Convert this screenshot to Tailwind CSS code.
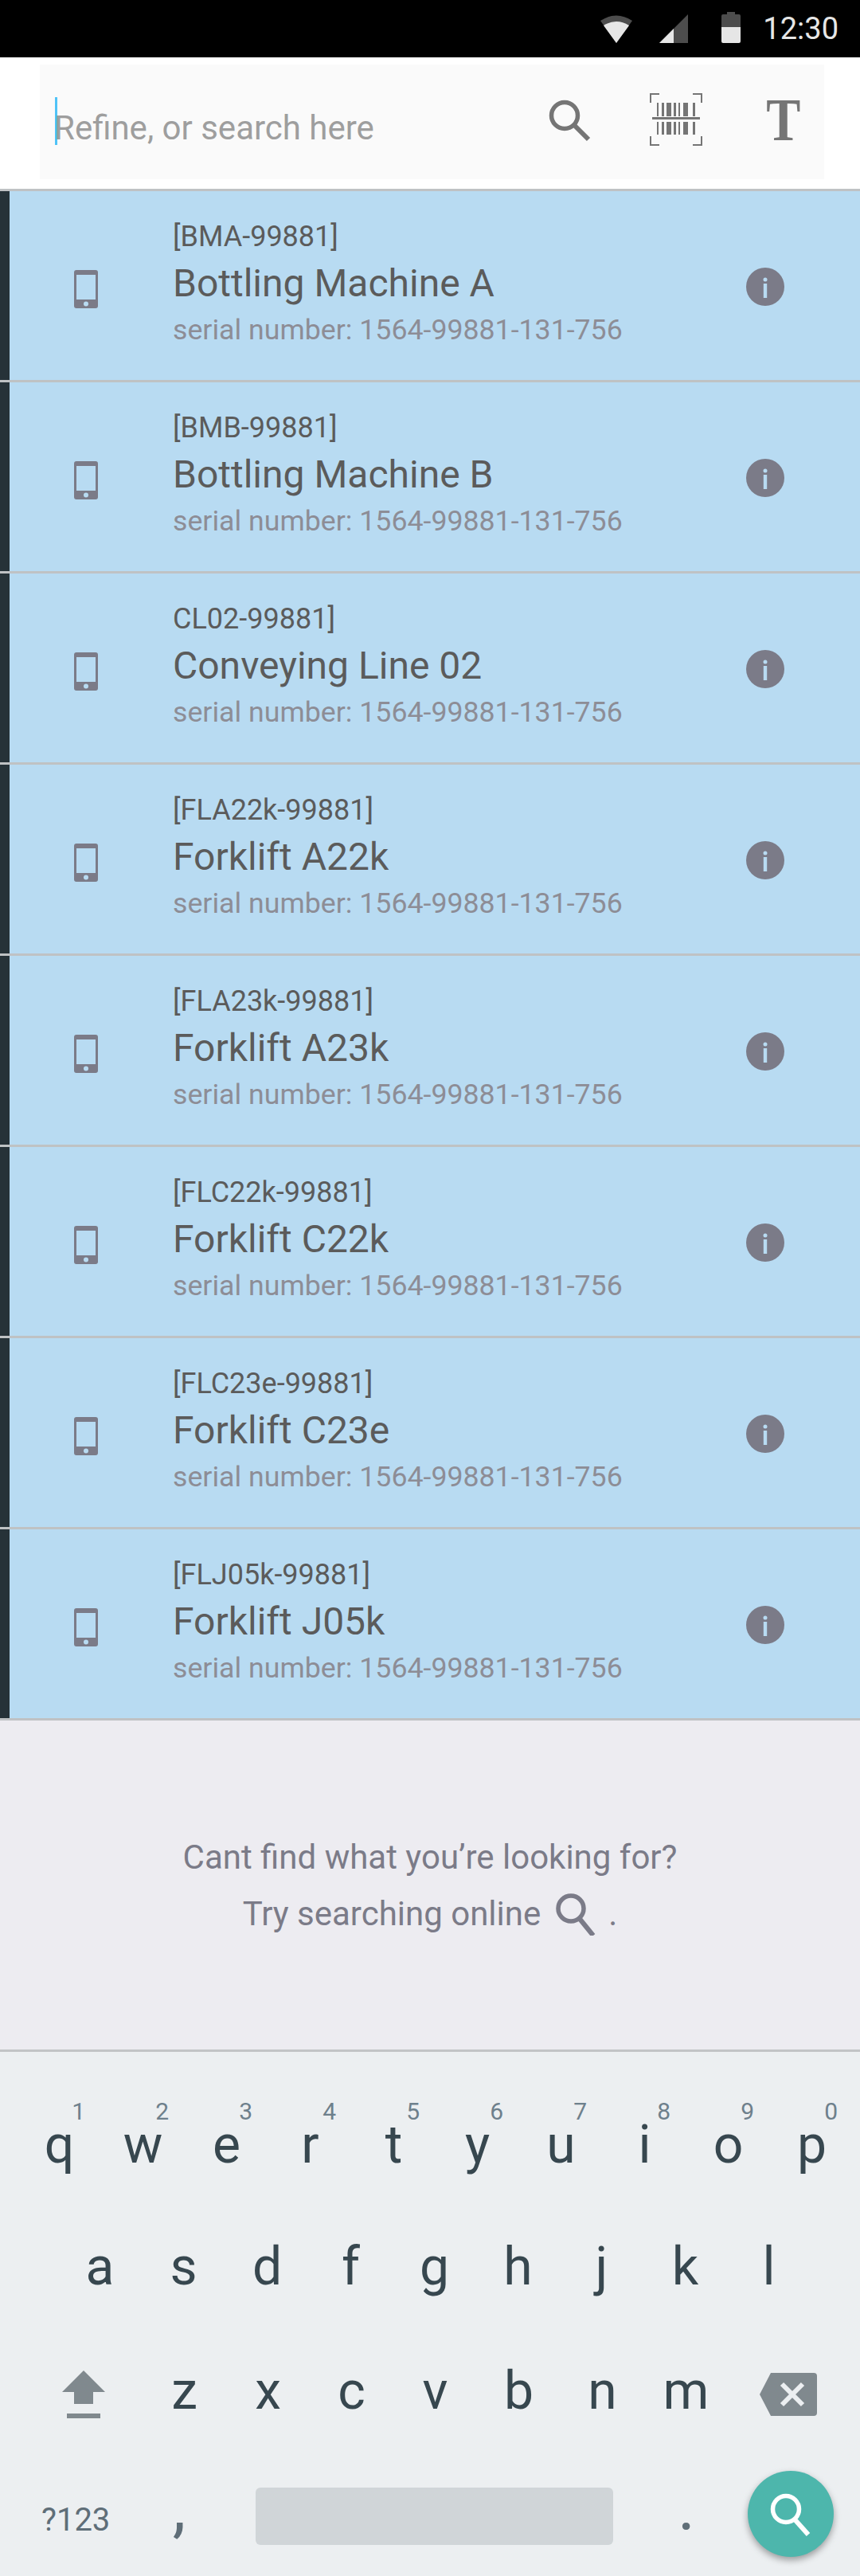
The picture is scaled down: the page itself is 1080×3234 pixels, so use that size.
<!DOCTYPE html>
<html>
<head>
<meta charset="utf-8">
<script src="https://cdn.jsdelivr.net/npm/@tailwindcss/browser@4"></script>
</head>
<body class="bg-[#eceff1]">
<div class="w-[1080px] h-[3234px] overflow-hidden font-['Roboto',sans-serif]">

  <!-- status bar -->
  <div class="h-[72px] bg-black flex items-center justify-end text-[#e6e6e6]">
    <svg class="w-[40px] h-[36px]" viewBox="0 0 40 36"><path d="M0 8Q20 -5 40 8L20 36Z" fill="#4d4d4d"/><path d="M4 14Q20 4 36 14L20 36Z" fill="#e6e6e6"/></svg>
    <svg class="w-[36px] h-[36px] ml-[34px]" viewBox="0 0 36 36"><path d="M36 0V36H0Z" fill="#4d4d4d"/><path d="M18 18V36H0Z" fill="#e6e6e6"/></svg>
    <svg class="w-[24px] h-[39px] ml-[42px] mb-[3px]" viewBox="0 0 24 39"><path d="M7 0H17V3H22Q24 3 24 5V19H0V5Q0 3 2 3H7Z" fill="#4d4d4d"/><path d="M0 19H24V37Q24 39 22 39H2Q0 39 0 37Z" fill="#e6e6e6"/></svg>
    <span class="text-[38px] leading-none ml-[28px] mr-[27px] mb-[1px]">12:30</span>
  </div>

  <!-- search header -->
  <div class="h-[165px] bg-white pt-[9px] pl-[50px] pr-[45px]">
    <div class="h-[144px] bg-[#fafafa] flex items-center pl-[19px]">
      <div class="w-[3px] h-[60px] bg-[#4fc3f7] mt-[-2px]"></div>
      <span class="text-[42px] text-[#9e9e9e] mt-[14px] ml-[-4px]">Refine, or search here</span>
      <svg class="ml-auto w-[60px] h-[60px] mt-[-6px]" viewBox="0 0 60 60" fill="none" stroke="#757575"><circle cx="24" cy="25" r="16.5" stroke-width="5.5"/><path d="M37 38L54 55" stroke-width="6"/></svg>
      <svg class="w-[66px] h-[66px] ml-[71px] mt-[-6px]" viewBox="0 0 66 66" fill="#757575">
        <path d="M12 0H0V12H2V2H12ZM54 0H66V12H64V2H54ZM12 66H0V54H2V64H12ZM54 66H66V54H64V64H54Z"/>
        <path d="M3 30H63V33H3Z"/>
        <path d="M9 12h2v17h-2zM15 12h3v17h-3zM21 12h6v17h-6zM30 12h3v17h-3zM36 12h2v17h-2zM42 12h6v17h-6zM54 12h3v17h-3zM9 36h2v16h-2zM15 36h3v16h-3zM21 36h6v16h-6zM30 36h3v16h-3zM36 36h2v16h-2zM42 36h6v16h-6zM54 36h3v16h-3z"/>
      </svg>
      <span class="w-[42px] ml-[77px] mr-[34px] text-center font-['Liberation_Serif',serif] font-bold text-[76px] leading-none text-[#757575] scale-x-[0.85] mt-[-6px]">T</span>
    </div>
  </div>
  <div class="h-[3px] bg-[#bfc2c4]"></div>

  <!-- machine rows -->
  <div id="rows"></div>

  <!-- empty hint -->
  <div class="h-[413px] bg-[#edecf1] text-[#7b7b88] text-[42px] text-center pt-[136px]">
    <p class="leading-[71px]">Cant find what you’re looking for?</p>
    <p class="leading-[71px] flex justify-center items-center">
      <span>Try searching online</span>
      <svg class="w-[54px] h-[54px] ml-[17px]" viewBox="0 0 54 54" fill="none" stroke="#7b7b88"><circle cx="21" cy="20" r="16" stroke-width="5.5"/><path d="M32 33L49 54" stroke-width="6"/></svg>
      <span class="ml-[14px]">.</span>
    </p>
  </div>
  <div class="h-[3px] bg-[#c2c4c6]"></div>

  <!-- keyboard -->
  <div class="h-[658px] bg-[#eceff1] text-[#37474f] text-[66px] leading-[132px] pt-[51px]">
    <div class="flex h-[153px] pl-[22px]">
      <div class="relative w-[105px] text-center">q<span class="absolute top-[-6px] right-[20px] text-[30px] leading-[60px] text-[#6e808c]">1</span></div>
      <div class="relative w-[105px] text-center">w<span class="absolute top-[-6px] right-[20px] text-[30px] leading-[60px] text-[#6e808c]">2</span></div>
      <div class="relative w-[105px] text-center">e<span class="absolute top-[-6px] right-[20px] text-[30px] leading-[60px] text-[#6e808c]">3</span></div>
      <div class="relative w-[105px] text-center">r<span class="absolute top-[-6px] right-[20px] text-[30px] leading-[60px] text-[#6e808c]">4</span></div>
      <div class="relative w-[105px] text-center">t<span class="absolute top-[-6px] right-[20px] text-[30px] leading-[60px] text-[#6e808c]">5</span></div>
      <div class="relative w-[105px] text-center">y<span class="absolute top-[-6px] right-[20px] text-[30px] leading-[60px] text-[#6e808c]">6</span></div>
      <div class="relative w-[105px] text-center">u<span class="absolute top-[-6px] right-[20px] text-[30px] leading-[60px] text-[#6e808c]">7</span></div>
      <div class="relative w-[105px] text-center">i<span class="absolute top-[-6px] right-[20px] text-[30px] leading-[60px] text-[#6e808c]">8</span></div>
      <div class="relative w-[105px] text-center">o<span class="absolute top-[-6px] right-[20px] text-[30px] leading-[60px] text-[#6e808c]">9</span></div>
      <div class="relative w-[105px] text-center">p<span class="absolute top-[-6px] right-[20px] text-[30px] leading-[60px] text-[#6e808c]">0</span></div>
    </div>
    <div class="flex h-[156px] pl-[73px]">
      <div class="w-[105px] text-center">a</div>
      <div class="w-[105px] text-center">s</div>
      <div class="w-[105px] text-center">d</div>
      <div class="w-[105px] text-center">f</div>
      <div class="w-[105px] text-center">g</div>
      <div class="w-[105px] text-center">h</div>
      <div class="w-[105px] text-center">j</div>
      <div class="w-[105px] text-center">k</div>
      <div class="w-[105px] text-center">l</div>
    </div>
    <div class="flex h-[153px] pl-[78px]">
      <svg class="w-[54px] h-[60px] mt-[40px]" viewBox="0 0 54 60" fill="#80898e"><path d="M27 0L54 27H39V42H15V27H0Z"/><path d="M6 54H48V60H6Z"/></svg>
      <div class="flex ml-[47px]">
        <div class="w-[105px] text-center">z</div>
        <div class="w-[105px] text-center">x</div>
        <div class="w-[105px] text-center">c</div>
        <div class="w-[105px] text-center">v</div>
        <div class="w-[105px] text-center">b</div>
        <div class="w-[105px] text-center">n</div>
        <div class="w-[105px] text-center">m</div>
      </div>
      <svg class="w-[72px] h-[54px] ml-[40px] mt-[43px]" viewBox="0 0 72 54"><path d="M14 0H68Q72 0 72 4V50Q72 54 68 54H14L0 27Z" fill="#80898e"/><path d="M28 14L54 40M54 14L28 40" stroke="#eceff1" stroke-width="6"/></svg>
    </div>
    <div class="flex items-start pl-[52px]">
      <span class="shrink-0 text-[40px] text-[#5f6e78] w-[95px] mt-[9px]">?123</span>
      <span class="shrink-0 w-[54px] ml-[51px] text-center text-[#5f6e78] text-[84px] mt-[-7px]">,</span>
      <div class="shrink-0 w-[449px] h-[72px] ml-[69px] mt-[34px] bg-[#d0d5d8] rounded-[6px]"></div>
      <span class="shrink-0 w-[60px] ml-[62px] text-center text-[#5f6e78] text-[84px] mt-[-7px]">.</span>
      <div class="shrink-0 w-[108px] h-[108px] ml-[47px] mt-[13px] rounded-full bg-[#4db6ac] shadow-[0_4px_8px_rgba(0,0,0,0.35)] flex items-center justify-center">
        <svg class="w-[56px] h-[56px]" viewBox="0 0 56 56" fill="none" stroke="#fff"><circle cx="22" cy="22" r="16.5" stroke-width="5.5"/><path d="M33 35L50 54" stroke-width="6"/></svg>
      </div>
    </div>
  </div>
</div>

<script>
  const machines = [
    ['[BMA-99881]', 'Bottling Machine A'],
    ['[BMB-99881]', 'Bottling Machine B'],
    ['CL02-99881]', 'Conveying Line 02'],
    ['[FLA22k-99881]', 'Forklift A22k'],
    ['[FLA23k-99881]', 'Forklift A23k'],
    ['[FLC22k-99881]', 'Forklift C22k'],
    ['[FLC23e-99881]', 'Forklift C23e'],
    ['[FLJ05k-99881]', 'Forklift J05k'],
  ];
  document.getElementById('rows').innerHTML = machines.map(([code, name]) => `
    <div class="h-[240px] bg-[#b8dbf2] border-b-[3px] border-[#bfc2c4] flex items-center">
      <div class="w-[12px] h-full bg-[#263238]"></div>
      <svg class="w-[30px] h-[48px] ml-[81px] mt-[9px]" viewBox="0 0 30 48"><path fill-rule="evenodd" d="M3 0H27Q30 0 30 3V45Q30 48 27 48H3Q0 48 0 45V3Q0 0 3 0ZM3 6V37H27V6ZM15 39.5A3 3 0 1 0 15 45.5A3 3 0 1 0 15 39.5Z" fill="#7b7b88"/></svg>
      <div class="ml-[94px] w-[720px] mb-[8px]">
        <div class="text-[36px] leading-[46px] text-[#5b5b5b]">${code}</div>
        <div class="text-[48px] leading-[72px] text-[#5b5b5b]">${name}</div>
        <div class="text-[35.7px] leading-[44px] text-[#8d8d96]">serial number: 1564-99881-131-756</div>
      </div>
      <svg class="w-[48px] h-[48px] mt-[3px]" viewBox="0 0 48 48"><circle cx="24" cy="24" r="24" fill="#7b7b88"/><circle cx="24" cy="15" r="2.5" fill="#b8dbf2"/><rect x="21.8" y="20" width="4.4" height="18" fill="#b8dbf2"/></svg>
    </div>`).join('');
</script>
</body>
</html>
